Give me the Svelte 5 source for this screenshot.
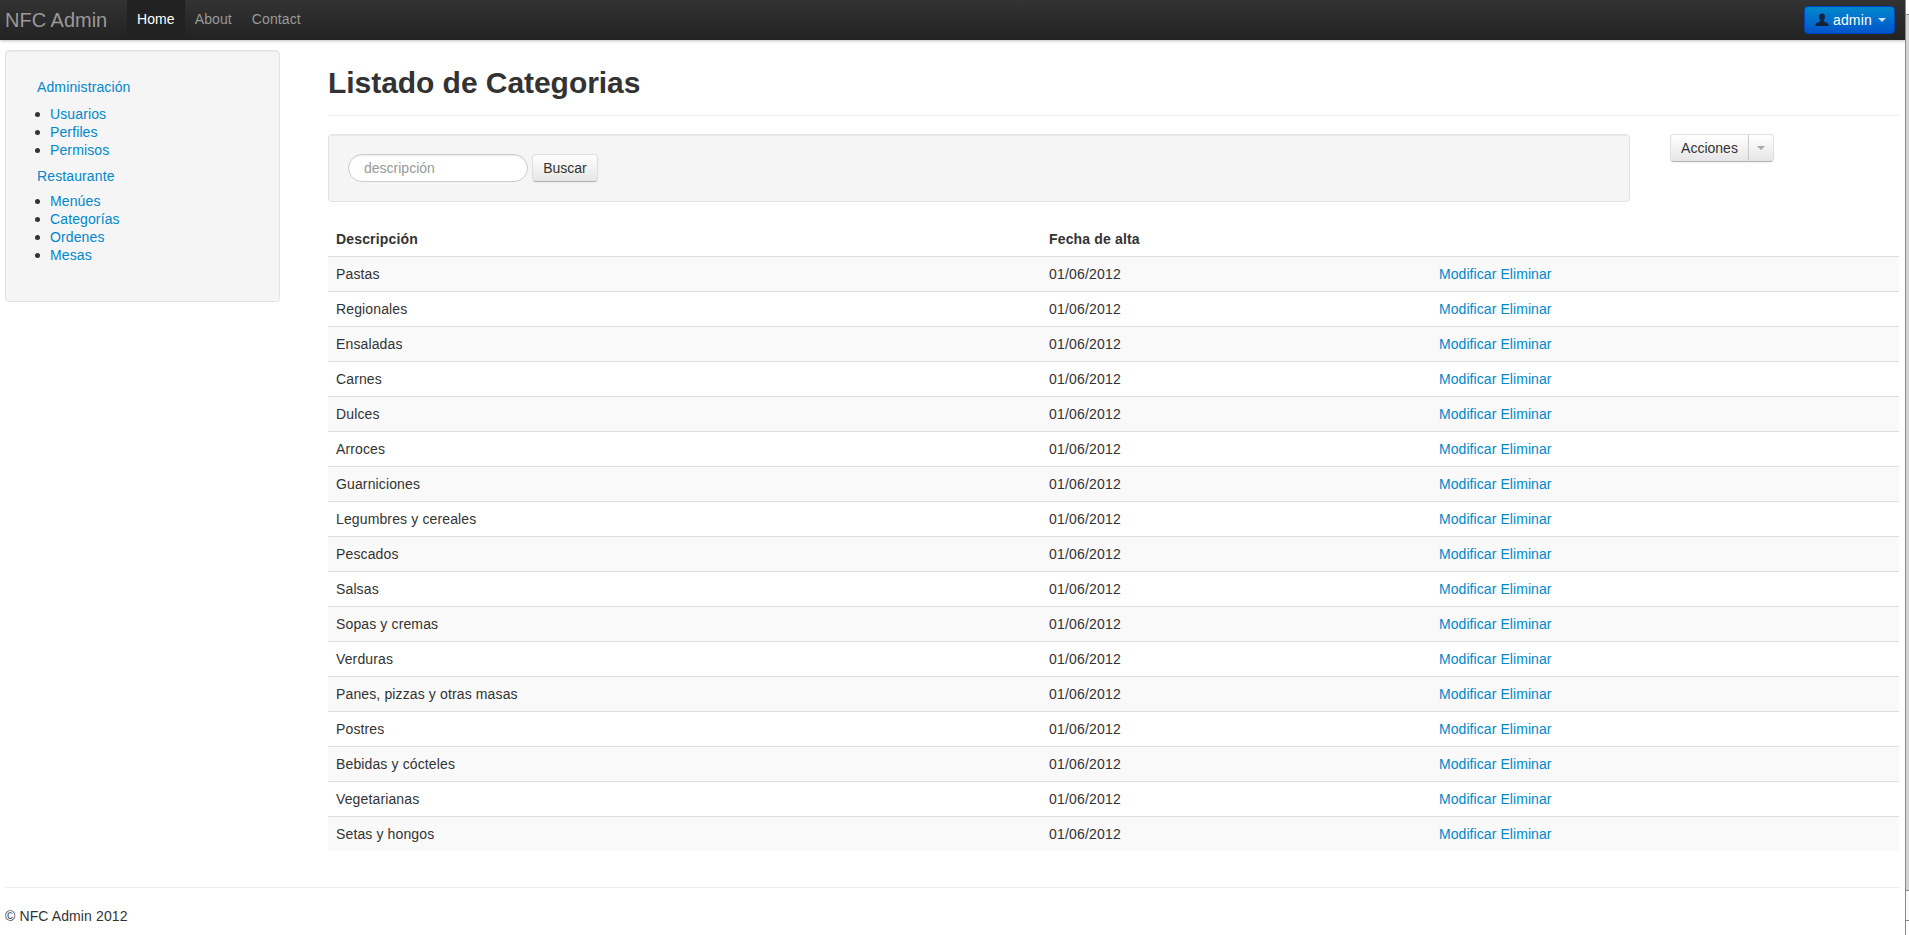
<script>
	const rows = [
		'Pastas', 'Regionales', 'Ensaladas', 'Carnes', 'Dulces', 'Arroces', 'Guarniciones',
		'Legumbres y cereales', 'Pescados', 'Salsas', 'Sopas y cremas', 'Verduras',
		'Panes, pizzas y otras masas', 'Postres', 'Bebidas y cócteles', 'Vegetarianas', 'Setas y hongos'
	];
	const menu = [
		{ title: 'Administración', items: ['Usuarios', 'Perfiles', 'Permisos'] },
		{ title: 'Restaurante', items: ['Menúes', 'Categorías', 'Ordenes', 'Mesas'] }
	];
</script>

<div class="page">
	<div class="navbar">
		<a class="brand" href="#top">NFC Admin</a>
		<ul class="nav">
			<li class="active"><a href="#top">Home</a></li>
			<li><a href="#top">About</a></li>
			<li><a href="#top">Contact</a></li>
		</ul>
		<button class="user">
			<svg class="icon-user" viewBox="0 0 14 14" width="14" height="14">
				<path d="M7 0.5c-2 0-3 1.4-3 3.2 0 1.3 .5 2.6 1.3 3.3 .2 .6 .1 1.2-.3 1.500C3.800 9.200 .8 9.900 .5 11.500V13h13v-1.500c-.3-1.600-3.300-2.300-4.500-3-.4-.3-.5-.9-.3-1.500C9.500 6.300 10 5 10 3.700 10 1.900 9 .5 7 .5z" fill="#14233a"/>
			</svg>
			<span class="user-name">admin</span>
			<span class="caret"></span>
		</button>
	</div>

	<div class="content">
		<aside class="sidebar">
			{#each menu as group}
				<a class="group-title" href="#top">{group.title}</a>
				<ul>
					{#each group.items as item}
						<li><a href="#top">{item}</a></li>
					{/each}
				</ul>
			{/each}
		</aside>

		<main>
			<h1>Listado de Categorias</h1>
			<div class="tools">
				<form class="well">
					<input type="text" placeholder="descripción" />
					<button type="button" class="btn search">Buscar</button>
				</form>
				<div class="btn-group">
					<button class="btn first">Acciones</button>
					<button class="btn last" aria-label="Más acciones"><span class="caret dark"></span></button>
				</div>
			</div>
			<table>
				<thead>
					<tr>
						<th class="c1">Descripción</th>
						<th class="c2">Fecha de alta</th>
						<th></th>
					</tr>
				</thead>
				<tbody>
					{#each rows as name}
						<tr>
							<td class="name">{name}</td>
							<td class="date">01/06/2012</td>
							<td class="actions"><a href="#top">Modificar</a> <a href="#top">Eliminar</a></td>
						</tr>
					{/each}
				</tbody>
			</table>
		</main>
	</div>

	<footer>
		<p>© NFC Admin 2012</p>
	</footer>
</div>

<div class="scrollbar">
	<div class="arrow"></div>
	<div class="thumb"></div>
	<div class="track"></div>
	<div class="arrow"></div>
</div>

<style>
	:global(body) {
		margin: 0;
		background: #fff;
		overflow: hidden;
	}

	.page {
		width: 1905px;
		height: 935px;
		font-family: 'Liberation Sans', Arial, sans-serif;
		font-size: 14px;
		line-height: 18px;
		color: #333;
		overflow: hidden;
	}

	a {
		color: #08c;
		text-decoration: none;
	}

	.navbar {
		display: flex;
		align-items: center;
		height: 40px;
		padding: 0 10px 0 5px;
		background: linear-gradient(#333, #222);
		box-shadow: 0 1px 3px rgba(0, 0, 0, 0.25);
	}

	.brand {
		font-size: 20px;
		color: #999;
		width: 122px;
	}

	.nav {
		display: flex;
		list-style: none;
		margin: 0;
		padding: 0;
		flex: 1;
		letter-spacing: 0.1px;
	}

	.nav a {
		display: block;
		padding: 9px 10px 11px;
		line-height: 20px;
		color: #999;
	}

	.nav .active a {
		color: #fff;
		background: #222;
	}

	.user {
		box-sizing: border-box;
		display: flex;
		align-items: center;
		height: 28px;
		width: 91px;
		padding: 0 0 0 10px;
		font: inherit;
		font-size: 14px;
		color: #fff;
		background: linear-gradient(#08c, #05c);
		border: 1px solid #04b;
		border-radius: 4px;
	}

	.user-name {
		margin-left: 4px;
		letter-spacing: 0.15px;
	}

	.caret {
		width: 0;
		height: 0;
		margin-left: 6px;
		border-left: 4px solid transparent;
		border-right: 4px solid transparent;
		border-top: 4px solid #fff;
		opacity: 0.8;
	}

	.caret.dark {
		display: block;
		margin: 0;
		border-top-color: #000;
		opacity: 0.3;
	}

	.content {
		display: flex;
		align-items: flex-start;
		padding: 10px 0 0 5px;
	}

	.sidebar {
		box-sizing: border-box;
		flex: none;
		width: 275px;
		height: 252px;
		margin-right: 48px;
		padding: 27px 19px 0;
		background: #f5f5f5;
		border: 1px solid #e3e3e3;
		border-radius: 4px;
		box-shadow: inset 0 1px 1px rgba(0, 0, 0, 0.05);
		letter-spacing: 0.12px;
	}

	.group-title {
		display: block;
		padding-left: 12px;
		margin-bottom: 9px;
	}

	ul + .group-title {
		margin-bottom: 7px;
	}

	.sidebar ul {
		margin: 0 0 8px;
		padding-left: 25px;
		list-style: none;
	}

	.sidebar li::before {
		content: '';
		display: inline-block;
		width: 5px;
		height: 5px;
		margin: 0 10px 1px -15px;
		vertical-align: middle;
		background: #333;
		border-radius: 50%;
	}

	main {
		flex: none;
		width: 1571px;
	}

	h1 {
		margin: 0;
		padding: 15px 0 14px;
		line-height: 36px;
		font-size: 30px;
		font-weight: bold;
		letter-spacing: -0.05px;
		border-bottom: 1px solid #eee;
	}

	.tools {
		display: flex;
		align-items: flex-start;
		margin-top: 18px;
		margin-bottom: 20px;
	}

	.well {
		box-sizing: border-box;
		display: flex;
		align-items: center;
		gap: 4px;
		width: 1302px;
		height: 68px;
		padding: 0 19px;
		background: #f5f5f5;
		border: 1px solid #e3e3e3;
		border-radius: 4px;
		box-shadow: inset 0 1px 1px rgba(0, 0, 0, 0.05);
	}

	input {
		box-sizing: border-box;
		width: 180px;
		height: 28px;
		padding: 0 15px;
		font: inherit;
		font-size: 14px;
		background: #fff;
		border: 1px solid #ccc;
		border-radius: 14px;
		box-shadow: inset 0 1px 1px rgba(0, 0, 0, 0.075);
		outline: none;
	}

	input::placeholder {
		color: #999;
		opacity: 1;
	}

	.btn {
		box-sizing: border-box;
		height: 28px;
		padding: 0;
		font: inherit;
		font-size: 14px;
		color: #333;
		background: linear-gradient(#fff, #e6e6e6);
		border: 1px solid #e0e0e0;
		border-bottom-color: #b3b3b3;
		border-radius: 4px;
		box-shadow: inset 0 1px 0 rgba(255, 255, 255, 0.2), 0 1px 2px rgba(0, 0, 0, 0.05);
	}

	.search {
		width: 66px;
	}

	.btn-group {
		display: flex;
		margin-left: 40px;
	}

	.first {
		width: 79px;
		border-radius: 4px 0 0 4px;
	}

	.last {
		display: flex;
		align-items: center;
		justify-content: center;
		width: 26px;
		margin-left: -1px;
		border-radius: 0 4px 4px 0;
		border-left-color: #ccc;
	}

	table {
		width: 100%;
		border-collapse: collapse;
		table-layout: fixed;
	}

	th,
	td {
		padding: 8px;
		text-align: left;
		line-height: 18px;
		height: 18px;
	}

	th {
		letter-spacing: 0.16px;
	}

	.c1 {
		width: 697px;
	}

	.c2 {
		width: 374px;
	}

	td {
		border-top: 1px solid #ddd;
	}

	.name {
		letter-spacing: 0.13px;
	}

	.date {
		letter-spacing: 0.18px;
	}

	.actions {
		letter-spacing: 0.07px;
	}

	tbody tr:nth-child(odd) td {
		background: #f9f9f9;
	}

	footer {
		margin-left: 5px;
		width: 1895px;
		padding-top: 36px;
	}

	footer p {
		margin: 0;
		padding-top: 19px;
		letter-spacing: 0.11px;
		border-top: 1px solid #eee;
	}

	.scrollbar {
		position: fixed;
		top: 0;
		right: 0;
		box-sizing: border-box;
		display: flex;
		flex-direction: column;
		width: 4px;
		height: 935px;
		background: #fff;
		border-left: 1px solid #888;
	}

	.arrow {
		flex: none;
		height: 14px;
		background: #fff;
	}

	.thumb {
		flex: none;
		height: 877px;
		background: #d4d4d4;
		border-top: 1px solid #888;
		border-bottom: 1px solid #888;
		box-sizing: border-box;
	}

	.track {
		flex: 1;
		background: #fafafa;
		border-bottom: 1px solid #888;
	}
</style>
